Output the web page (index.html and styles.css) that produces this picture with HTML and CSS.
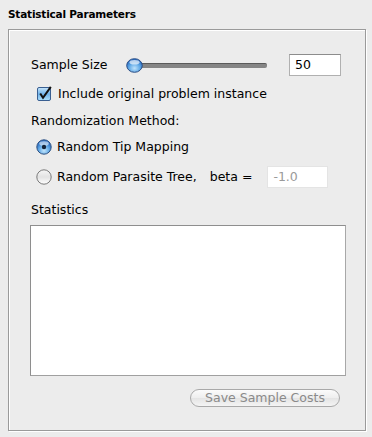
FILE: index.html
```html
<!DOCTYPE html>
<html>
<head>
<meta charset="utf-8">
<link rel="stylesheet" href="styles.css">
</head>
<body>
<div class="title">Statistical Parameters</div>
<div class="panel">
  <div class="row row-size">
    <span class="label size-label">Sample Size</span>
    <div class="slider">
      <div class="track"></div>
      <svg class="thumb" width="17" height="15" viewBox="0 0 17 15">
        <defs>
          <radialGradient id="tg" cx="50%" cy="70%" r="60%">
            <stop offset="0" stop-color="#bfe3fb"/>
            <stop offset="0.6" stop-color="#5fa8e6"/>
            <stop offset="1" stop-color="#2b6fc4"/>
          </radialGradient>
        </defs>
        <ellipse cx="8.5" cy="7.5" rx="7.8" ry="6.8" fill="url(#tg)" stroke="#2d4f86" stroke-width="1"/>
        <ellipse cx="8.5" cy="4.3" rx="5" ry="2.3" fill="#ffffff" opacity="0.65"/>
      </svg>
    </div>
    <div class="field size-field">50</div>
  </div>
  <div class="row row-check">
    <svg class="check" width="16" height="15" viewBox="0 0 16 15">
      <defs>
        <linearGradient id="cg" x1="0" y1="0" x2="0" y2="1">
          <stop offset="0" stop-color="#c9e6fb"/>
          <stop offset="0.5" stop-color="#6fb3ea"/>
          <stop offset="1" stop-color="#aee0fb"/>
        </linearGradient>
      </defs>
      <rect x="0.5" y="1.5" width="13" height="13" rx="1.5" fill="url(#cg)" stroke="#3a5f91"/>
      <path d="M3.2 7.5 L6 11.8 L13.8 0.8" fill="none" stroke="#111" stroke-width="2"/>
    </svg>
    <span class="label">Include original problem instance</span>
  </div>
  <div class="row row-method">
    <span class="label">Randomization Method:</span>
  </div>
  <div class="row row-radio1">
    <svg class="radio" width="16" height="16" viewBox="0 0 16 16">
      <defs>
        <radialGradient id="rg" cx="50%" cy="75%" r="60%">
          <stop offset="0" stop-color="#c4e6fc"/>
          <stop offset="0.6" stop-color="#62aae7"/>
          <stop offset="1" stop-color="#2d70c3"/>
        </radialGradient>
      </defs>
      <circle cx="8" cy="8" r="7.2" fill="url(#rg)" stroke="#2f5282"/>
      <ellipse cx="8" cy="4.6" rx="4.8" ry="2.4" fill="#fff" opacity="0.55"/>
      <circle cx="8" cy="8" r="2.2" fill="#15243a"/>
    </svg>
    <span class="label">Random Tip Mapping</span>
  </div>
  <div class="row row-radio2">
    <svg class="radio" width="16" height="16" viewBox="0 0 16 16">
      <defs>
        <linearGradient id="ug" x1="0" y1="0" x2="0" y2="1">
          <stop offset="0" stop-color="#f6f6f6"/>
          <stop offset="0.5" stop-color="#e2e2e2"/>
          <stop offset="1" stop-color="#ffffff"/>
        </linearGradient>
      </defs>
      <circle cx="8" cy="8" r="7.2" fill="url(#ug)" stroke="#7a7a7a"/>
    </svg>
    <span class="label parasite">Random Parasite Tree,</span>
    <span class="label">beta =</span>
    <div class="field beta-field">-1.0</div>
  </div>
  <div class="row row-stats">
    <span class="label">Statistics</span>
  </div>
  <div class="textarea"></div>
  <div class="row row-button">
    <div class="button">Save Sample Costs</div>
  </div>
</div>
</body>
</html>
```

FILE: styles.css
```css
html, body {
  margin: 0;
  padding: 0;
  background: #ececec;
  font-family: "DejaVu Sans", sans-serif;
  color: #000;
  width: 372px;
  height: 437px;
  overflow: hidden;
}

.title {
  font-family: "DejaVu Sans", sans-serif;
  font-weight: bold;
  font-size: 10.5px;
  line-height: 14px;
  padding: 7px 0 0 8px;
  height: 15px;
  letter-spacing: -0.2px;
}

.panel {
  margin: 7px 0 0 8px;
  width: 356px;
  height: 400px;
  border: 1px solid #9a9a9a;
  box-shadow: inset 1px 1px 0 #fff, 1px 1px 0 #fff;
  box-sizing: content-box;
  display: flex;
  flex-direction: column;
  padding: 0;
}

.row {
  display: flex;
  align-items: center;
  margin-left: 22px;
}

.label {
  font-size: 12.5px;
  line-height: 16px;
  white-space: nowrap;
}

.row-size {
  margin-top: 24px;
  height: 22px;
}

.size-label {
  width: 94px;
}

.slider {
  position: relative;
  width: 143px;
  height: 22px;
}

.track {
  position: absolute;
  left: 8px;
  right: 1px;
  top: 9px;
  height: 4px;
  border-radius: 2px;
  background: #858585;
  border-top: 1px solid #5a5a5a;
  box-sizing: content-box;
}

.thumb {
  position: absolute;
  left: 1px;
  top: 4px;
}

.field {
  background: #fff;
  border: 1px solid #b0b0b0;
  border-top-color: #8c8c8c;
  box-sizing: border-box;
  font-size: 12.5px;
  line-height: 20px;
  padding-left: 5px;
}

.size-field {
  margin-left: 21px;
  width: 52px;
  height: 22px;
}

.row-check {
  margin-top: 9px;
  height: 18px;
  margin-left: 28px;
}

.check {
  margin-right: 5px;
  margin-top: -2px;
}

.row-method {
  margin-top: 9px;
  height: 18px;
}

.row-radio1 {
  margin-top: 8px;
  height: 18px;
  margin-left: 27px;
}

.radio {
  margin-right: 5px;
}

.row-radio2 {
  margin-top: 10px;
  height: 22px;
  margin-left: 27px;
}

.parasite {
  margin-right: 13px;
}

.beta-field {
  margin-left: 15px;
  width: 61px;
  height: 22px;
  border-color: #e4e4e4;
  color: #9a9a9a;
}

.row-stats {
  margin-top: 13px;
  height: 18px;
}

.textarea {
  margin: 6px 0 0 21px;
  width: 316px;
  height: 151px;
  background: #fff;
  border: 1px solid #8e8e8e;
  border-right-color: #a8a8a8;
  border-bottom-color: #a0a0a0;
  box-sizing: border-box;
}

.row-button {
  margin-top: 13px;
  margin-left: 181px;
  height: 18px;
}

.button {
  width: 150px;
  height: 18px;
  box-sizing: border-box;
  border: 1px solid #a9a9a9;
  border-radius: 9px;
  background: linear-gradient(#fbfbfb, #eeeeee 50%, #e4e4e4 51%, #f4f4f4);
  color: #8a8a8a;
  font-size: 12.5px;
  line-height: 16px;
  text-align: center;
}
```
